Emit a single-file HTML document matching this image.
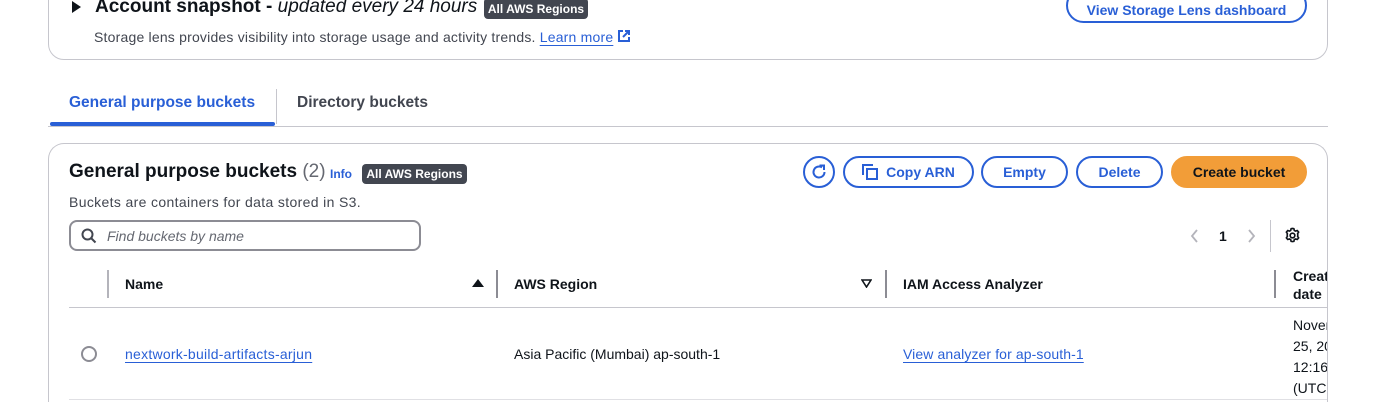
<!DOCTYPE html>
<html><head><meta charset="utf-8"><style>
*{box-sizing:border-box;margin:0;padding:0}
html,body{width:1392px;height:402px;overflow:hidden}
body{background:#fff;font-family:"Liberation Sans",sans-serif;color:#0f141a;position:relative}
.a{position:absolute;white-space:nowrap}
.btn{position:absolute;border:2px solid #295fd6;border-radius:18px;color:#295fd6;font-weight:bold;font-size:14px;display:flex;align-items:center;justify-content:center;background:#fff}
.badge{position:absolute;background:#424650;color:#fff;font-weight:bold;font-size:12px;border-radius:4px;display:flex;align-items:center;justify-content:center}
.lnk{color:#295fd6;text-decoration:underline;text-underline-offset:3px}
.vs{position:absolute;width:2px;background:#8c8c94}
</style></head><body>
<div class="a" style="left:48px;top:-30px;width:1280px;height:90px;border:1px solid #c6c6cd;border-radius:16px"></div>
<div class="a" style="left:72px;top:1px;width:0;height:0;border-top:6px solid transparent;border-bottom:6px solid transparent;border-left:9px solid #0f141a"></div>
<div class="a" style="left:95px;top:-4px;font-size:19px;font-weight:bold">Account snapshot - <i style="font-weight:normal">updated every 24 hours</i></div>
<div class="badge" style="left:484px;top:-2px;width:104px;height:21px">All AWS Regions</div>
<div class="a" style="left:94px;top:29px;font-size:14px;color:#424650;letter-spacing:0.2px">Storage lens provides visibility into storage usage and activity trends. <span class="lnk">Learn more</span> <svg width="14" height="14" viewBox="0 0 14 14" style="vertical-align:-1px"><path d="M6 2H2v10h10V8M8 2h4v4M12 2L6 8" fill="none" stroke="#295fd6" stroke-width="2"/></svg></div>
<div class="btn" style="left:1066px;top:-12px;width:241px;height:35px;padding-top:8px">View Storage Lens dashboard</div>
<div class="a" style="left:69px;top:94px;font-size:15.5px;font-weight:bold;color:#295fd6">General purpose buckets</div>
<div class="a" style="left:297px;top:94px;font-size:15.5px;font-weight:bold;color:#424650">Directory buckets</div>
<div class="a" style="left:276px;top:89px;width:1px;height:35px;background:#c6c6cd"></div>
<div class="a" style="left:48px;top:126px;width:1280px;height:1px;background:#c6c6cd"></div>
<div class="a" style="left:50px;top:122px;width:225px;height:4px;background:#295fd6;border-radius:2px"></div>
<div class="a" style="left:48px;top:143px;width:1280px;height:259px;border:1px solid #c6c6cd;border-bottom:none;border-radius:16px 16px 0 0"></div>
<div class="a" style="left:69px;top:161px;font-size:19px;font-weight:bold">General purpose buckets <span style="font-weight:normal;color:#656871">(2)</span></div>
<div class="a" style="left:330px;top:167px;font-size:12px;font-weight:bold;color:#295fd6">Info</div>
<div class="badge" style="left:362px;top:164px;width:105px;height:20px">All AWS Regions</div>
<div class="a" style="left:69px;top:194px;font-size:14px;color:#424650;letter-spacing:0.35px">Buckets are containers for data stored in S3.</div>
<div class="a" style="left:69px;top:220px;width:352px;height:31px;border:2px solid #8c8c94;border-radius:8px"></div>
<svg class="a" style="left:81px;top:228px" width="16" height="16" viewBox="0 0 16 16"><circle cx="6.5" cy="6.5" r="5" fill="none" stroke="#424650" stroke-width="2"/><path d="M10 10l4.5 4.5" stroke="#424650" stroke-width="2"/></svg>
<div class="a" style="left:107px;top:228px;font-size:14px;font-style:italic;color:#656871">Find buckets by name</div>
<div class="btn" style="left:803px;top:156px;width:32px;height:32px;border-radius:50%"><svg width="18" height="18" viewBox="0 0 18 18"><path d="M14.5 9A5.5 5.5 0 1 1 12 4.4" fill="none" stroke="#295fd6" stroke-width="2"/><path d="M9.5 2.5h4.5v4.5" fill="none" stroke="#295fd6" stroke-width="2"/></svg></div>
<div class="btn" style="left:843px;top:156px;width:131px;height:32px"><svg width="16" height="16" viewBox="0 0 16 16" style="margin-right:8px"><path d="M1 11V1h10" fill="none" stroke="#295fd6" stroke-width="2"/><rect x="5" y="5" width="10" height="10" fill="none" stroke="#295fd6" stroke-width="2"/></svg>Copy ARN</div>
<div class="btn" style="left:981px;top:156px;width:87px;height:32px">Empty</div>
<div class="btn" style="left:1076px;top:156px;width:87px;height:32px">Delete</div>
<div class="btn" style="left:1171px;top:156px;width:136px;height:32px;background:#f29d38;border-color:#f29d38;color:#0f141a">Create bucket</div>
<svg class="a" style="left:1190px;top:229px" width="9" height="14" viewBox="0 0 9 14"><path d="M7 1L2 7l5 6" fill="none" stroke="#b4b4bb" stroke-width="1.8"/></svg>
<div class="a" style="left:1219px;top:228px;font-size:14px;font-weight:bold">1</div>
<svg class="a" style="left:1247px;top:229px" width="9" height="14" viewBox="0 0 9 14"><path d="M2 1l5 6-5 6" fill="none" stroke="#b4b4bb" stroke-width="1.8"/></svg>
<div class="a" style="left:1270px;top:220px;width:1px;height:32px;background:#c6c6cd"></div>
<svg class="a" style="left:1284px;top:227px" width="17" height="17" viewBox="0 0 24 24"><path d="M12 2l2 .3.5 2.5 1.8 1 2.4-.9 2 2.4-1.5 2 .3 2-.3 2 1.5 2-2 2.4-2.4-.9-1.8 1-.5 2.5-2 .3-2-.3-.5-2.5-1.8-1-2.4.9-2-2.4 1.5-2-.3-2 .3-2-1.5-2 2-2.4 2.4.9 1.8-1 .5-2.5z" fill="none" stroke="#0f141a" stroke-width="2.3" stroke-linejoin="round"/><circle cx="12" cy="12" r="3.3" fill="none" stroke="#0f141a" stroke-width="2.3"/></svg>
<div class="vs" style="left:107px;top:270px;height:28px;background:#b4b4bb"></div>
<div class="a" style="left:125px;top:276px;font-size:14px;font-weight:bold">Name</div>
<div class="a" style="left:472px;top:279px;width:0;height:0;border-left:6px solid transparent;border-right:6px solid transparent;border-bottom:8px solid #0f141a"></div>
<div class="vs" style="left:496px;top:270px;height:28px"></div>
<div class="a" style="left:514px;top:276px;font-size:14px;font-weight:bold">AWS Region</div>
<svg class="a" style="left:861px;top:279px" width="11" height="9" viewBox="0 0 11 9"><path d="M1 1h9L5.5 8z" fill="none" stroke="#0f141a" stroke-width="1.6"/></svg>
<div class="vs" style="left:885px;top:270px;height:28px"></div>
<div class="a" style="left:903px;top:276px;font-size:14px;font-weight:bold">IAM Access Analyzer</div>
<div class="vs" style="left:1274px;top:270px;height:28px"></div>
<div class="a" style="left:1293px;top:267px;width:34px;overflow:hidden;font-size:14px;font-weight:bold;line-height:18px">Creat<br>date</div>
<div class="a" style="left:69px;top:307px;width:1258px;height:1px;background:#c6c6cd"></div>
<div class="a" style="left:81px;top:346px;width:16px;height:16px;border:2px solid #8c8c94;border-radius:50%"></div>
<div class="a lnk" style="left:125px;top:346px;font-size:14px;letter-spacing:0.25px">nextwork-build-artifacts-arjun</div>
<div class="a" style="left:514px;top:346px;font-size:14px">Asia Pacific (Mumbai) ap-south-1</div>
<div class="a lnk" style="left:903px;top:346px;font-size:14px;letter-spacing:0.1px">View analyzer for ap-south-1</div>
<div class="a" style="left:1293px;top:315px;width:34px;height:84px;overflow:hidden;font-size:14px;line-height:21px">Novem<br>25, 20<br>12:16<br>(UTC-</div>
<div class="a" style="left:69px;top:399px;width:1258px;height:1px;background:#e0e0e4"></div>
</body></html>
